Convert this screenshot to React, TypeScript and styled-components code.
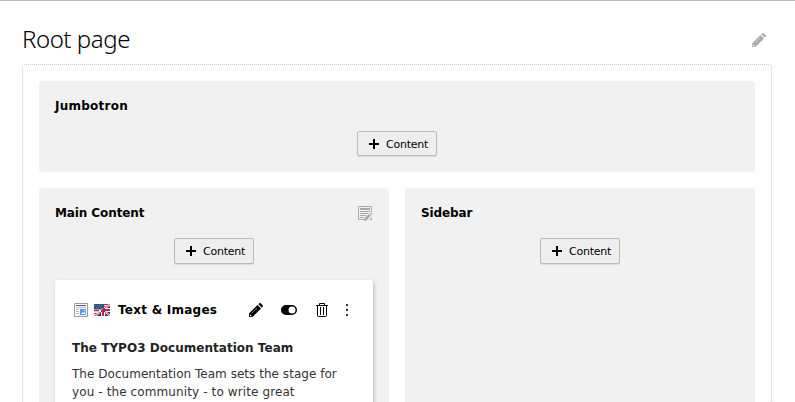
import React from "react";
import styled, { createGlobalStyle } from "styled-components";

const GlobalStyle = createGlobalStyle`
  * { box-sizing: border-box; }
  html, body { margin: 0; height: 402px; overflow: hidden; background: #fff; }
  body { font-family: Verdana, "DejaVu Sans", sans-serif; font-size: 12px; color: #000; }
  h1, h2, h3, p { margin: 0; }
  svg { display: block; flex: none; }
`;

const Page = styled.main`
  height: 402px;
  overflow: hidden;
  border-top: 1px solid #bbb;
  padding: 20px 23px 0 22px;
`;

const PageHeader = styled.header`
  display: flex;
  align-items: center;
  justify-content: space-between;
  height: 38px;
  padding-right: 5px;
  margin-bottom: 5px;
`;

const PageTitle = styled.h1`
  font: 350 24px/36px "Noto Sans", sans-serif;
  height: 38px;
  letter-spacing: -0.45px;
`;

const Grid = styled.div`
  display: grid;
  grid-template-columns: 350px 350px;
  grid-template-rows: 91px 300px;
  gap: 16px;
  padding: 16px;
  border: 1px dotted #ccc;
  border-radius: 4px;
`;

const Column = styled.section<{ $wide?: boolean }>`
  grid-column: ${(p) => (p.$wide ? "1 / -1" : "auto")};
  background: #f1f1f1;
  border-radius: 4px;
  padding: 16px;
`;

const ColumnHeader = styled.div`
  display: flex;
  justify-content: space-between;
  align-items: center;
  height: 17px;
  margin-bottom: 17px;
`;

const ColumnTitle = styled.h2<{ $spacing: number }>`
  padding-top: 1px;
  font-size: 12px;
  line-height: 17px;
  font-weight: 700;
  letter-spacing: ${(p) => p.$spacing}px;
`;

const AddButton = styled.button<{ $height: number }>`
  display: flex;
  align-items: center;
  gap: 4px;
  width: 80px;
  height: ${(p) => p.$height}px;
  margin: 0 auto;
  padding: 0 0 0 8px;
  border: 1px solid #bbb;
  border-radius: 2px;
  background: #eee;
  box-shadow: 0 1px 1px rgba(0, 0, 0, 0.1);
  font: 11px/22px Verdana, "DejaVu Sans", sans-serif;
  letter-spacing: -0.25px;
  color: #000;
`;

const AddLabel = styled.span`
  padding-top: 2px;
`;

const Card = styled.article`
  height: 180px;
  margin-top: 16px;
  padding: 22px 17px 0;
  background: #fff;
  border-radius: 3px;
  box-shadow: 1px 2px 4px rgba(0, 0, 0, 0.22);
`;

const CardHeader = styled.div`
  display: flex;
  align-items: center;
  height: 16px;
  padding-left: 1px;
`;

const CardType = styled.span`
  width: 130px;
  margin-left: 8px;
  font-weight: 700;
  line-height: 16px;
  letter-spacing: 0.25px;
`;

const FlagSlot = styled.span`
  margin-left: 5px;
`;

const Actions = styled.div`
  display: flex;
  align-items: center;
  gap: 17px;
`;

const MoreButton = styled.span`
  margin-left: -8px;
`;

const CardHeadline = styled.h3`
  margin-top: 21px;
  font-size: 12px;
  line-height: 18px;
  color: #212424;
  letter-spacing: 0.03px;
`;

const CardText = styled.p<{ $spacing: number }>`
  color: #333;
  line-height: 18px;
  white-space: nowrap;
  letter-spacing: ${(p) => p.$spacing}px;
`;

const CardBody = styled.div`
  margin-top: 8px;
`;

const Pencil = ({ color = "#000" }: { color?: string }) => (
  <svg width="16" height="16" viewBox="0 0 16 16" fill={color}>
    <path d="m9.500 3-8.300 8.200L1 15l3.800-.2L13 6.500zM2 12.300l1.700 1.700L2 14z" fillRule="evenodd" />
    <path d="m4 11 5-5" stroke="#fff" strokeOpacity=".7" strokeWidth=".6" />
    <path d="M13.707 5.707l1.354-1.354a.5.5 0 0 0 0-.707L12.354.939a.5.5 0 0 0-.707 0l-1.354 1.354 3.414 3.414z" />
    <path d="m10 2.500 3.500 3.500" stroke="#fff" strokeOpacity=".6" strokeWidth=".8" />
  </svg>
);

const Plus = () => (
  <svg width="16" height="16" viewBox="0 0 16 16">
    <path d="M7 3h2v4h4v2H9v4H7V9H3V7h4z" />
  </svg>
);

const EditList = () => (
  <svg width="16" height="16" viewBox="0 0 16 16">
    <path d="M14.500 7V1.500H1.500v13H7M12.500 14.500h2v-2" fill="none" stroke="#aaa" />
    <path d="M3 3h10v2H3zM3 6h10v1H3zM3 8h8v1H3zM3 10h6v1H3zM3 12h4v1H3z" fill="#aaa" />
    <path d="m7 15.700.3-2.300 4.700-4.700 2 2-4.700 4.700zM12.700 8l.8-.8 2 2-.8.8z" fill="#aaa" />
  </svg>
);

const TextImage = () => (
  <svg width="16" height="16" viewBox="0 0 16 16">
    <path d="M1.500 1.500h13v13h-13z" fill="#fff" stroke="#999" />
    <path d="M3 3h10v1H3z" fill="#555" />
    <path d="M3 5h10v1H3zM3 7h3v1H3zM3 9h3v1H3zM3 11h3v1H3z" fill="#b9b9b9" />
    <path d="M7 7h6v6H7z" fill="#5599ff" />
    <path d="m8 12 1.500-2 1 1 1-1.500L12.500 12zM11 8h1v1h-1z" fill="#fff" />
  </svg>
);

const Flag = () => (
  <svg width="16" height="12" viewBox="0 0 16 12">
    <path d="M0 0h16v12H0z" fill="#f4eef1" />
    <path d="M0 6h5v1.300H0zM0 9h3v1.300H0zM10 0h6v1h-6zM9 2h5v1H9z" fill="#c12b43" />
    <path d="M16 0v12H0z" fill="#273470" />
    <path d="M0 0h10v5.500H0z" fill="#33507d" />
    <path d="M1 1h1v1H1zM3 1h1v1H3zM5 1h1v1H5zM7 1h1v1H7zM2 3h1v1H2zM4 3h1v1H4zM6 3h1v1H6z" fill="#6980a3" />
    <path d="M16 .5 11 4M11 8l5 3.500M6 8l-5 4" fill="none" stroke="#fff" strokeWidth="2" />
    <path d="M7 6v6h4V3L9 4.500H8L7 6zM10 4h6v4H5l2-2z" fill="#fff" />
    <path d="M8 5h1l1-1v8H8zM9 5h7v2H7z" fill="#cb203d" />
    <path d="m16 .5-5 3.500M11 8l5 3.500M6 8l-5 4" fill="none" stroke="#cb203d" strokeWidth=".8" />
  </svg>
);

const Toggle = () => (
  <svg width="16" height="16" viewBox="0 0 16 16">
    <path fillRule="evenodd" d="M5 3h6a5 5 0 0 1 0 10H5A5 5 0 0 1 5 3zm6 1.500a3.500 3.500 0 1 0 0 7 3.500 3.500 0 0 0 0-7z" />
  </svg>
);

const Trash = () => (
  <svg width="16" height="16" viewBox="0 0 16 16" fill="none" stroke="#000">
    <path d="M2 3.500h12M5.500 3V1.500h5V3M3.500 4v9.500q0 1 1 1h7q1 0 1-1V4M6.500 5v8M9.500 5v8" />
  </svg>
);

const Dots = () => (
  <svg width="16" height="16" viewBox="0 0 16 16" fill="#333">
    <path d="M7 2h2v2H7zM7 7h2v2H7zM7 12h2v2H7z" />
  </svg>
);

const AddContent = ({ height = 26 }: { height?: number }) => (
  <AddButton $height={height}>
    <Plus />
    <AddLabel>Content</AddLabel>
  </AddButton>
);

export default function App() {
  return (
    <>
      <GlobalStyle />
      <Page>
        <PageHeader>
          <PageTitle>Root page</PageTitle>
          <Pencil color="#aaa" />
        </PageHeader>
        <Grid>
          <Column $wide>
            <ColumnHeader>
              <ColumnTitle $spacing={0.25}>Jumbotron</ColumnTitle>
            </ColumnHeader>
            <AddContent height={25} />
          </Column>
          <Column>
            <ColumnHeader>
              <ColumnTitle $spacing={-0.1}>Main Content</ColumnTitle>
              <EditList />
            </ColumnHeader>
            <AddContent />
            <Card>
              <CardHeader>
                <TextImage />
                <FlagSlot>
                  <Flag />
                </FlagSlot>
                <CardType>Text &amp; Images</CardType>
                <Actions>
                  <Pencil />
                  <Toggle />
                  <Trash />
                  <MoreButton>
                    <Dots />
                  </MoreButton>
                </Actions>
              </CardHeader>
              <CardHeadline>The TYPO3 Documentation Team</CardHeadline>
              <CardBody>
                <CardText $spacing={0.03}>The Documentation Team sets the stage for</CardText>
                <CardText $spacing={0.11}>you - the community - to write great</CardText>
              </CardBody>
            </Card>
          </Column>
          <Column>
            <ColumnHeader>
              <ColumnTitle $spacing={-0.1}>Sidebar</ColumnTitle>
            </ColumnHeader>
            <AddContent />
          </Column>
        </Grid>
      </Page>
    </>
  );
}
